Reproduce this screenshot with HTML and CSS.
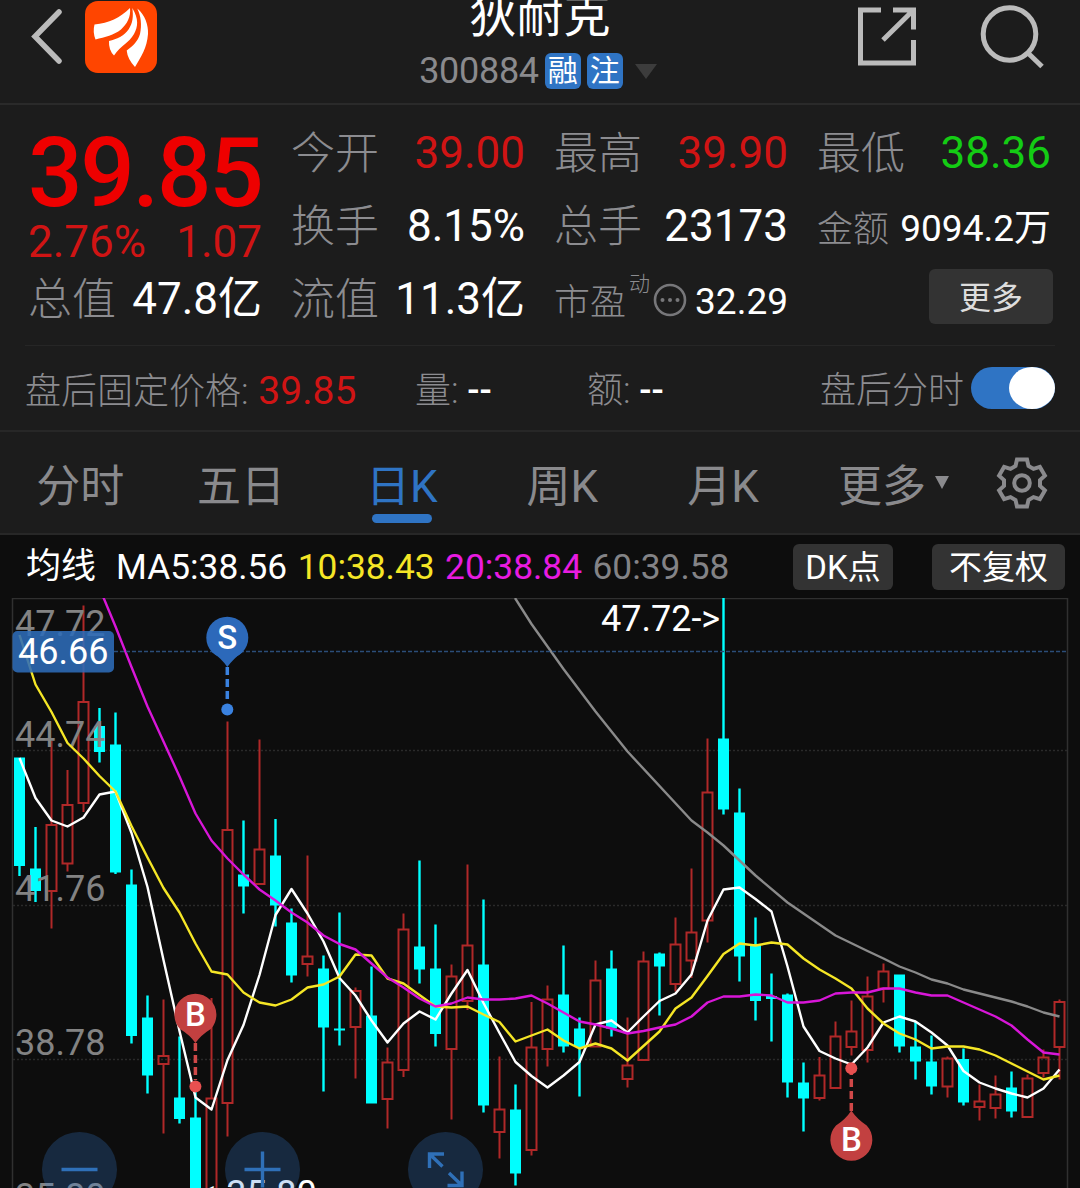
FILE: index.html
```html
<!DOCTYPE html>
<html lang="zh-CN">
<head>
  <meta charset="UTF-8">
  <meta name="viewport" content="width=device-width, initial-scale=1.0">
  <title>狄耐克 300884</title>
  <link rel="stylesheet" href="styles.css">
</head>
<body>
  <header class="topbar">
    <div class="topbar-left">
      <svg class="back" width="36" height="60" viewBox="0 0 36 60">
        <path d="M31 6 L7 30.5 L31 55" />
      </svg>
      <svg class="logo" width="72" height="72" viewBox="85 1 72 72">
        <rect x="85" y="1" width="72" height="72" rx="13" fill="#ff4500" />
        <g fill="#fff">
          <path d="M94.5 24.5 C109 23 120 18 130 8 C131 17 127 24 121 29.5 C114 35 105 37 95.5 39.5 Q92.5 32 94.5 24.5 Z" />
          <path d="M132.3 8 C139 19 138 27 134 34 C129 43 121 45 114 55.5 Q108.5 50 109 41 C117 39 124 36 128.5 29.5 C133 23 133.5 16 132.3 8 Z" />
          <path d="M137.3 8.5 C145 15 148.5 25 148 34 C147 48 141 57 135 67 Q127.5 59 126.7 50.5 C133 46 138 41 140 34 C142 25 141 16 137.3 8.5 Z" />
        </g>
      </svg>
    </div>
    <div class="topbar-title">
      <h1>狄耐克</h1>
      <div class="code-row">
        <span class="code">300884</span>
        <span class="badge">融</span>
        <span class="badge">注</span>
        <span class="caret"></span>
      </div>
    </div>
    <div class="topbar-right">
      <svg width="64" height="64" viewBox="855 5 64 64">
        <path d="M881 11 H860.5 V64 H913.5 V41 M893 11 H913.5 V30.5 M913 11.5 L883 41" />
      </svg>
      <svg width="68" height="68" viewBox="979 4 68 68">
        <circle cx="1009.5" cy="34" r="26.3" />
        <path d="M1028.5 53.5 L1042 66.5" />
      </svg>
    </div>
  </header>

  <section class="quote">
    <div class="price">
      <div class="price-now">39.85</div>
      <div class="price-change"><span>2.76%</span><span>1.07</span></div>
    </div>
    <div class="cell"><span class="label">今开</span><span class="value red">39.00</span></div>
    <div class="cell"><span class="label">最高</span><span class="value red">39.90</span></div>
    <div class="cell"><span class="label">最低</span><span class="value green">38.36</span></div>
    <div class="cell"><span class="label">换手</span><span class="value">8.15%</span></div>
    <div class="cell"><span class="label">总手</span><span class="value">23173</span></div>
    <div class="cell small"><span class="label">金额</span><span class="value">9094.2万</span></div>
    <div class="cell"><span class="label">总值</span><span class="value">47.8亿</span></div>
    <div class="cell"><span class="label">流值</span><span class="value">11.3亿</span></div>
    <div class="cell small">
      <span class="label">市盈<sup>动</sup></span>
      <svg class="info" width="34" height="34" viewBox="-17 -17 34 34">
        <circle r="15" fill="none" stroke="#77777a" stroke-width="2.6" />
        <circle cx="-7.5" r="2" /><circle r="2" /><circle cx="7.5" r="2" />
      </svg>
      <span class="value">32.29</span>
    </div>
    <div class="cell more-cell"><button class="more">更多</button></div>
  </section>

  <section class="after">
    <div class="after-price">盘后固定价格: <span class="red">39.85</span></div>
    <div class="after-vol">量: <b>--</b></div>
    <div class="after-amt">额: <b>--</b></div>
    <div class="after-switch">盘后分时<span class="toggle"><i></i></span></div>
  </section>

  <nav class="tabs">
    <div class="tab">分时</div>
    <div class="tab">五日</div>
    <div class="tab active">日K</div>
    <div class="tab">周K</div>
    <div class="tab">月K</div>
    <div class="tab tab-more">更多<span class="caret"></span></div>
    <svg class="gear" width="56" height="56" viewBox="-28 -28 56 56">
      <path d="M-6.5 -17 L-5 -23.5 H5 L6.5 -17 L11.5 -14.1 L17.9 -16.1 L22.9 -7.4 L18 -2.9 V2.9 L22.9 7.4 L17.9 16.1 L11.5 14.1 L6.5 17 L5 23.5 H-5 L-6.5 17 L-11.5 14.1 L-17.9 16.1 L-22.9 7.4 L-18 2.9 V-2.9 L-22.9 -7.4 L-17.9 -16.1 L-11.5 -14.1 Z" />
      <circle r="7.8" />
    </svg>
  </nav>

  <section class="legend">
    <span class="ma-title">均线</span>
    <span class="ma ma5">MA5:38.56</span>
    <span class="ma ma10">10:38.43</span>
    <span class="ma ma20">20:38.84</span>
    <span class="ma ma60">60:39.58</span>
    <button class="dk">DK点</button>
    <button class="fq">不复权</button>
  </section>

  <section class="chart">
    <svg id="kline" width="1080" height="590" viewBox="0 598 1080 590">
      <g class="frame">
        <path d="M12.5 1188 V598.5 H1067.5 V1188" />
        <path class="dots" d="M13 750.5 H1067 M13 905.5 H1067 M13 1059.5 H1067" />
      </g>
      <g id="candles"></g>
      <g class="axis">
        <text x="15" y="636">47.72</text>
        <text x="15" y="746.5">44.74</text>
        <text x="15" y="900.5">41.76</text>
        <text x="15" y="1054.5">38.78</text>
        <text x="15" y="1209">35.80</text>
      </g>
      <g id="lines"></g>
      <path class="cost" d="M114 651.5 H1066" />
      <g class="extreme">
        <text x="601" y="631">47.72-&gt;</text>
        <text x="198" y="1206">&lt;-35.80</text>
      </g>
      <g class="mark sell">
        <path class="stem" d="M227.3 667 V702" />
        <circle class="dot" cx="227.3" cy="709.5" r="6" />
        <circle cx="227.3" cy="637.7" r="21" />
        <path d="M212 652 Q222 659 227.3 667 Q233 659 242.6 652 Z" />
        <text x="227.3" y="649">S</text>
      </g>
      <g class="mark buy">
        <path class="stem" d="M195.4 1043 V1080" />
        <circle class="dot" cx="195.4" cy="1086.5" r="6" />
        <path d="M180 1029 A21 21 0 1 1 210.8 1029 Q201 1035 195.4 1043 Q190 1035 180 1029 Z" />
        <text x="195.4" y="1026">B</text>
      </g>
      <g class="mark buy">
        <path class="stem" d="M851.3 1111 V1073" />
        <circle class="dot" cx="851.3" cy="1068.3" r="6" />
        <path d="M836 1125.5 A21 21 0 1 0 866.7 1125.5 Q857 1119 851.3 1110.5 Q846 1119 836 1125.5 Z" />
        <text x="851.3" y="1151.3">B</text>
      </g>
      <g class="tag">
        <rect x="12.5" y="631" width="101.5" height="41.5" rx="5" />
        <text x="18" y="663.8">46.66</text>
      </g>
    </svg>
    <div class="tools">
      <span class="tool"><svg viewBox="-37.5 -37.5 75 75"><path d="M-18 0 H18" /></svg></span>
      <span class="tool"><svg viewBox="-37.5 -37.5 75 75"><path d="M-18 0 H18 M0 -18 V18" /></svg></span>
      <span class="tool"><svg viewBox="-37.5 -37.5 75 75"><path d="M-1.5 -15.5 H-16 V-1.5 M-16 -15.5 L-3 -3 M2 16 H16.5 V2 M16.5 16 L3.5 3.5" /></svg></span>
    </div>
  </section>

  <script src="chart.js"></script>
</body>
</html>
```
FILE: styles.css
```css
* {
  box-sizing: border-box;
}
body {
  margin: 0;
  width: 1080px;
  height: 1188px;
  overflow: hidden;
  background: #1c1c1c;
  color: #fff;
  font-family: Roboto, 'Noto Sans CJK SC', sans-serif;
  font-weight: 400;
}
button {
  border: 0;
  padding: 0;
  border-radius: 6px;
  background: #333;
  color: #fff;
  font-family: inherit;
}
.red {
  color: #d01414;
}
.green {
  color: #14cc14;
}

/* Top bar */
.topbar {
  height: 105px;
  display: flex;
  justify-content: space-between;
  border-bottom: 2px solid #2a2a2a;
}
.topbar svg {
  fill: none;
  stroke: #bbb;
  stroke-width: 5;
  flex: none;
}
.topbar-left {
  width: 390px;
  display: flex;
  align-items: flex-start;
  padding: 1px 0 0 28px;
}
.topbar .back {
  margin: 5px 21px 0 0;
  stroke-width: 5.5;
  stroke-linecap: round;
}
.topbar .logo {
  stroke: none;
}
.topbar-title {
  display: flex;
  flex-direction: column;
  align-items: center;
  width: 300px;
}
h1 {
  margin: -10px 0 0;
  font-size: 47px;
  line-height: 52px;
  font-weight: 400;
}
.code-row {
  display: flex;
  align-items: center;
  margin: 11px 4px 0 0;
  height: 36px;
  font-size: 36px;
  line-height: 38px;
}
.code {
  color: #8a8a8d;
  letter-spacing: -0.3px;
}
.badge {
  width: 36px;
  height: 36px;
  margin-left: 6px;
  border-radius: 6px;
  background: #2f74c4;
  font-size: 30px;
  line-height: 35px;
  text-align: center;
}
.topbar-title .badge + .caret {
  margin-left: 12px;
}
.caret {
  border: 11px solid transparent;
  border-top: 15px solid #3c3c3c;
  border-bottom: 0;
}
.topbar-right {
  width: 390px;
  display: flex;
  justify-content: flex-end;
  gap: 60px;
  padding: 4px 33px 0 0;
}

/* Quote table */
.quote {
  display: grid;
  grid-template-columns: repeat(4, 234px);
  grid-template-rows: repeat(3, 73px);
  column-gap: 29px;
  height: 240px;
  padding: 12px 28px 0;
}
.price {
  grid-row: span 2;
  padding-top: 12px;
  color: #ee0000;
}
.price-now {
  font-size: 96px;
  line-height: 88px;
  font-weight: 500;
  letter-spacing: -2.3px;
}
.price-change {
  display: flex;
  justify-content: space-between;
  margin-top: 3px;
  font-size: 44px;
  line-height: 44px;
  color: #d01414;
}
.cell {
  display: flex;
  justify-content: space-between;
  align-items: baseline;
  height: 73px;
  font-size: 44px;
  line-height: 73px;
  white-space: nowrap;
}
.label {
  position: relative;
  top: 1px;
  color: #8c8c90;
  font-weight: 300;
}
.small {
  font-size: 37px;
  line-height: 78px;
}
.small .label {
  font-size: 36px;
}
.label sup {
  font-size: 21px;
  line-height: 0;
  vertical-align: 24px;
  margin-left: 3px;
}
.info {
  align-self: center;
  margin: 0 -6px 0 -12px;
  fill: #77777a;
}
.more-cell {
  justify-content: flex-end;
  align-items: center;
}
.more {
  width: 124px;
  height: 55px;
  margin: -6px -2px 0 0;
  padding-bottom: 4px;
  font-size: 32px;
  color: #ddd;
}

/* After-hours row */
.after {
  display: grid;
  grid-template-columns: 390px 172px 233px 235px;
  height: 85px;
  margin: 0 25px;
  border-top: 1px solid #262626;
  font-size: 36px;
  line-height: 90px;
  font-weight: 300;
  color: #8c8c90;
  white-space: nowrap;
}
.after .red {
  margin-left: 1px;
  font-size: 39px;
  font-weight: 400;
}
.after b {
  color: #fff;
  font-weight: 500;
}
.after-switch {
  display: flex;
  align-items: flex-start;
  gap: 7px;
}
.toggle {
  width: 85px;
  height: 42px;
  margin-top: 21px;
  border-radius: 21px;
  background: #2f74c4;
  display: flex;
  justify-content: flex-end;
}
.toggle i {
  width: 46px;
  height: 42px;
  border-radius: 50%;
  background: #fff;
}

/* Period tabs */
.tabs {
  display: flex;
  align-items: center;
  height: 105px;
  border-top: 2px solid #272727;
  border-bottom: 2px solid #272727;
  font-size: 44px;
  line-height: 44px;
  color: #8a8a8d;
}
.tab {
  width: 160.7px;
  height: 76px;
  padding-top: 20px;
  text-align: center;
}
.active {
  color: #2f74c4;
}
.active::after {
  content: '';
  display: block;
  width: 60px;
  height: 9px;
  margin: 5px auto 0;
  border-radius: 5px;
  background: #2f74c4;
}
.tab-more {
  display: flex;
  justify-content: center;
  width: 180px;
}
.tab .caret {
  border-width: 13px 7.5px 0;
  border-top-color: #8a8a8d;
  height: 0;
  margin: 11px 0 0 9px;
}
.gear {
  margin-left: 11px;
  fill: none;
  stroke: #8a8a8d;
  stroke-width: 4;
}

/* Moving average legend */
.legend {
  display: flex;
  align-items: center;
  height: 63px;
  padding: 0 15px 0 26px;
  background: #0d0d0d;
  font-size: 35.3px;
  line-height: 66px;
  white-space: nowrap;
}
.ma-title {
  font-size: 35px;
  margin-right: 20px;
}
.ma {
  margin-right: 10.5px;
}
.ma10 {
  color: #f5e626;
}
.ma20 {
  color: #e81be0;
}
.ma60 {
  color: #838386;
}
.legend button {
  height: 46px;
  font-size: 33px;
  line-height: 47px;
}
.dk {
  width: 100px;
  margin-left: auto;
}
.fq {
  width: 133px;
  margin-left: 39px;
}

/* K line chart */
.chart {
  position: relative;
  height: 590px;
  background: #0d0d0d;
}
.chart svg {
  display: block;
}
.chart text {
  font-size: 36px;
  fill: #fff;
}
.frame path {
  fill: none;
  stroke: #303030;
  stroke-width: 1.5;
}
.frame .dots {
  stroke: #2a2a2a;
  stroke-dasharray: 2 2;
}
.chart .axis text {
  fill: #838383;
}
.up {
  fill: none;
  stroke: #b02828;
  stroke-width: 2;
}
.down {
  fill: #00ffff;
  stroke: none;
}
.ma-line {
  fill: none;
  stroke-width: 2.4;
  stroke-linejoin: round;
}
.cost {
  stroke: #2b4d78;
  stroke-width: 1.6;
  stroke-dasharray: 4 2;
}
.mark .stem {
  stroke-width: 3.5;
  stroke-dasharray: 8 4;
}
.chart .mark text {
  font-size: 33px;
  font-weight: 500;
  text-anchor: middle;
}
.sell {
  fill: #2c69ba;
}
.sell .stem {
  stroke: #3a82e0;
}
.sell .dot {
  fill: #3a82e0;
}
.buy {
  fill: #c24040;
}
.buy .stem {
  stroke: #d04848;
}
.buy .dot {
  fill: #e85050;
}
.tag rect {
  fill: #2d6cb8;
  opacity: 0.88;
}
.tools {
  position: absolute;
  left: 42px;
  top: 533.5px;
  display: flex;
  gap: 108px;
}
.tool {
  width: 75px;
  height: 75px;
  border-radius: 50%;
  background: rgba(57, 129, 217, 0.25);
}
.tool path {
  fill: none;
  stroke: #2f70b8;
  stroke-width: 3.4;
}
```
FILE: chart.js
```js
// Candles: [up, high, body top, body bottom, low]
const candles = [
  [0, 757.5, 757.5, 866, 876], [0, 827, 868.5, 891, 902], [1, 741, 825, 891, 928.5],
  [1, 770, 805, 863.5, 871.5], [1, 605.5, 702, 803, 812], [0, 708, 726, 752, 762.5],
  [0, 712.5, 744.5, 872.5, 874], [0, 869.5, 884.5, 1036, 1043.5], [0, 995.5, 1017.5, 1075.5, 1093.5],
  [1, 999.5, 1056, 1064, 1133.5], [0, 1036.5, 1097.5, 1119, 1123.5], [0, 1090, 1117.5, 1195, 1200],
  [1, 998, 1098.5, 1195, 1200], [1, 721.5, 830, 1103, 1136.5], [0, 820.5, 874.5, 886.5, 913.5],
  [1, 739.5, 849.5, 884, 884], [0, 819, 855.5, 905.5, 926.5], [0, 908.5, 922.5, 975.5, 982.5],
  [1, 855.5, 956.5, 964, 976.5], [0, 955.5, 968.5, 1027.5, 1091.5], [0, 912.5, 1028.5, 1030.5, 1045.5],
  [1, 987.5, 991, 1027, 1078.5], [0, 966.5, 1015.5, 1103.5, 1103.5], [1, 1047.5, 1062.5, 1099, 1128.5],
  [1, 913.5, 929.5, 1070, 1077], [0, 860.5, 946.5, 969.5, 983.5], [0, 924.5, 968.5, 1034, 1046.5],
  [1, 964.5, 976.5, 1049, 1119.5], [1, 864.5, 945.5, 1001, 1010], [0, 899.5, 964.5, 1105.5, 1112.5],
  [1, 1056.5, 1109.5, 1132, 1158.5], [0, 1084.5, 1109.5, 1173.5, 1185.5], [1, 1002, 1047.5, 1150, 1155.5],
  [1, 985.5, 999.5, 1049, 1066.5], [0, 945.5, 994.5, 1046.5, 1052.5], [0, 1017.5, 1028.5, 1047, 1096.5],
  [1, 960.5, 980.5, 1046.5, 1046.5], [0, 950.5, 968.5, 1028.5, 1036.5], [1, 1017.5, 1065.5, 1079, 1087.5],
  [1, 951.5, 961.5, 1060, 1060], [0, 952.5, 953.5, 966.5, 1015.5], [1, 917.5, 944.5, 984, 991.5],
  [1, 868.5, 932.5, 960.5, 978], [1, 738.5, 792.5, 920.5, 942.5], [0, 598, 738.5, 809.5, 814.5],
  [0, 788.5, 812.5, 956.5, 981.5], [0, 917.5, 944, 1001, 1020.5], [0, 973.5, 996, 999, 1041.5],
  [0, 993.5, 994.5, 1082.5, 1097.5], [0, 1062.5, 1082.5, 1098.5, 1131.5], [1, 1057, 1075.5, 1098, 1100.5],
  [1, 1021.5, 1036.5, 1088, 1088], [1, 1000.5, 1031.5, 1047, 1055.5], [1, 976.5, 996.5, 1050, 1062.5],
  [1, 963.5, 971.5, 988.5, 1002.5], [0, 974.5, 974.5, 1046.5, 1052.5], [0, 1021.5, 1046.5, 1061.5, 1079.5],
  [0, 1035.5, 1061.5, 1086.5, 1094.5], [1, 1056.5, 1058.5, 1086.5, 1097.5], [0, 1048.5, 1059, 1102.5, 1105.5],
  [1, 1084.5, 1101.5, 1107, 1120.5], [1, 1075.5, 1094.5, 1108, 1118.5], [0, 1071.5, 1087.5, 1111.5, 1117.5],
  [1, 1074.5, 1078.5, 1117, 1117], [1, 1049.5, 1057.5, 1073, 1077.5], [1, 999.5, 1002, 1047, 1079.5]
];

const ma5 = [758, 798, 820.5, 826.5, 817.5, 794.5, 791.5, 833, 887, 960, 1031, 1097.5, 1109.5, 1060, 1025, 975,
  915, 889, 913.5, 941.5, 978, 995.5, 1020.5, 1042.5, 1023.5, 1011.5, 1019.5, 993.5, 970, 1003, 1033, 1062,
  1076, 1087.5, 1075.5, 1062, 1024.5, 1020.5, 1032.5, 1016.5, 1001, 993.5, 974.5, 920.5, 889.5, 887.5, 899,
  911.5, 966.5, 1026.5, 1051, 1058.5, 1064.5, 1047.5, 1022.5, 1016.5, 1021.5, 1032.5, 1045.5, 1071, 1082.5,
  1088.5, 1093.5, 1097.5, 1088.5, 1069.5];

const ma10 = [635, 684.5, 712, 743, 758.5, 776, 791.5, 826, 857.5, 888, 912.5, 943.5, 971.5, 974.5, 992.5, 1002.5,
  1005.5, 999.5, 987.5, 984.5, 976.5, 954.5, 955.5, 978.5, 983.5, 995, 1006.5, 1007.5, 1006.5, 1014.5, 1022,
  1041.5, 1035.5, 1029.5, 1040.5, 1048.5, 1043.5, 1048.5, 1060.5, 1046, 1031.5, 1008.5, 997.5, 976, 954, 943.5,
  945.5, 942.5, 944.5, 958.5, 969.5, 978.5, 988.5, 1008.5, 1023.5, 1033.5, 1039.5, 1048.5, 1046.5, 1046.5,
  1049.5, 1055.5, 1063.5, 1071.5, 1079.5, 1075.5];

// Starts at the sixth candle, above the top edge
const ma20 = [588, 626.5, 667, 706.5, 741.5, 776.5, 813.5, 840.5, 858.5, 874.5, 889.5, 900.5, 912.5, 922.5, 935.5,
  944, 949.5, 963.5, 977.5, 987.5, 998.5, 1006.5, 1003.5, 997.5, 999.5, 999.5, 998.5, 995.5, 1003.5, 1012.5,
  1021.5, 1024.5, 1028.5, 1033.5, 1031, 1027.5, 1024.5, 1016.5, 1002.5, 996.5, 996.5, 994.5, 995.5, 1002.5,
  1002.5, 1000.5, 993.5, 992.5, 992.5, 988.5, 988.5, 992.5, 995.5, 995.5, 1002.5, 1009.5, 1016.5, 1025.5,
  1039.5, 1052.5, 1054.5];

const ma60 = '515,598 531.5,624 563.5,669 595.5,711.5 627.5,751.5 691.5,820.5 707.5,832.5 723.5,845.5 755.5,875.5 ' +
  '787.5,902.5 835.5,935.5 867.5,951 883.5,958.5 899.5,966.5 915.5,972.5 931.5,979.5 947.5,983.5 963.5,989.5 ' +
  '1011.5,1001.5 1027.5,1006.5 1043.5,1012.5 1059.5,1016.5';

const xAt = i => 19.5 + i * 16; // Centre of candle i

// Draw the candles
document.getElementById('candles').innerHTML = candles.map(([up, high, top, bottom, low], i) => {
  const x = xAt(i);
  if (up) {
    return `<path class="up" d="M${x} ${high} V${top} M${x} ${bottom} V${low} M${x - 5} ${top} H${x + 5} V${bottom} H${x - 5} Z" />`;
  }
  return `<path class="down" d="M${x - 1.2} ${high} h2.4 V${low} h-2.4 Z M${x - 5.5} ${top} h11 V${bottom} h-11 Z" />`;
}).join('');

// Draw the moving averages
const toPoints = (values, start) => values.map((y, i) => `${xAt(i + start)},${y}`).join(' ');
const line = (points, color) => `<polyline class="ma-line" points="${points}" stroke="${color}" />`;

document.getElementById('lines').innerHTML =
  line(ma60, '#8a8a8a') +
  line(toPoints(ma5, 0), '#fff') +
  line(toPoints(ma10, 0), '#f5e626') +
  line(toPoints(ma20, 5), '#d816d8');
```
